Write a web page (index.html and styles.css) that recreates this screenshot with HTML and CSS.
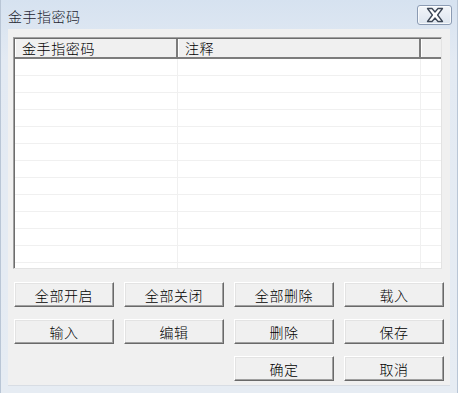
FILE: index.html
```html
<!DOCTYPE html>
<html lang="zh-CN">
<head>
    <meta charset="UTF-8">
    <title>金手指密码</title>
    <link rel="stylesheet" href="styles.css">
</head>
<body>
    <div class="window">
        <div class="titlebar">
            <span class="title">金手指密码</span>
            <button class="close-btn">
                <svg width="20" height="16" viewBox="0 0 20 16">
                    <path d="M2.5 1.5 L7 1.5 L10 5 L13 1.5 L17.5 1.5 L12.6 8 L17.5 14.5 L13 14.5 L10 11 L7 14.5 L2.5 14.5 L7.4 8 Z" fill="#fff" stroke="#3c4655" stroke-width="1.3" stroke-linejoin="round"/>
                </svg>
            </button>
        </div>

        <div class="client">
            <div class="listview">
                <div class="lv-header">
                    <div class="col col-code">金手指密码</div>
                    <div class="col col-note">注释</div>
                    <div class="col col-fill"></div>
                </div>
                <div class="lv-body">
                    <div class="row"><div class="cell c1"></div><div class="cell c2"></div><div class="cell c3"></div></div>
                    <div class="row"><div class="cell c1"></div><div class="cell c2"></div><div class="cell c3"></div></div>
                    <div class="row"><div class="cell c1"></div><div class="cell c2"></div><div class="cell c3"></div></div>
                    <div class="row"><div class="cell c1"></div><div class="cell c2"></div><div class="cell c3"></div></div>
                    <div class="row"><div class="cell c1"></div><div class="cell c2"></div><div class="cell c3"></div></div>
                    <div class="row"><div class="cell c1"></div><div class="cell c2"></div><div class="cell c3"></div></div>
                    <div class="row"><div class="cell c1"></div><div class="cell c2"></div><div class="cell c3"></div></div>
                    <div class="row"><div class="cell c1"></div><div class="cell c2"></div><div class="cell c3"></div></div>
                    <div class="row"><div class="cell c1"></div><div class="cell c2"></div><div class="cell c3"></div></div>
                    <div class="row"><div class="cell c1"></div><div class="cell c2"></div><div class="cell c3"></div></div>
                    <div class="row"><div class="cell c1"></div><div class="cell c2"></div><div class="cell c3"></div></div>
                    <div class="row"><div class="cell c1"></div><div class="cell c2"></div><div class="cell c3"></div></div>
                    <div class="row"><div class="cell c1"></div><div class="cell c2"></div><div class="cell c3"></div></div>
                </div>
            </div>

            <div class="buttons">
                <button class="btn">全部开启</button>
                <button class="btn">全部关闭</button>
                <button class="btn">全部删除</button>
                <button class="btn">载入</button>
                <button class="btn">输入</button>
                <button class="btn">编辑</button>
                <button class="btn">删除</button>
                <button class="btn">保存</button>
                <button class="btn btn-ok">确定</button>
                <button class="btn">取消</button>
            </div>
        </div>
    </div>
</body>
</html>
```

FILE: styles.css
```css
* {
    box-sizing: border-box;
    margin: 0;
    padding: 0;
}

body {
    background: #f0f0f0;
    font-family: "Noto Sans CJK SC", "Noto Sans", sans-serif;
    font-size: 14px;
    font-weight: 300;
    color: #000;
}

.window {
    width: 458px;
    height: 393px;
    background: linear-gradient(#d6e2f0, #e3eaf3 60px, #e6ecf3);
    padding: 0 7px 7px 7px;
    border-left: 1px solid #b9c6d6;
    border-right: 1px solid #b9c6d6;
}

.titlebar {
    height: 29px;
    display: flex;
    align-items: center;
    justify-content: space-between;
}

.title {
    font-size: 14px;
    letter-spacing: 0.5px;
    color: #1e2530;
    margin-top: 2px;
}

.close-btn {
    width: 35px;
    height: 20px;
    margin-right: -2px;
    margin-top: 1px;
    border: 1px solid #8b9bb3;
    border-radius: 3px;
    background: linear-gradient(#f2f5f9, #dde5ef);
    box-shadow: inset 0 0 0 1px rgba(255,255,255,0.7);
    display: flex;
    align-items: center;
    justify-content: center;
}

.client {
    height: 357px;
    background: #f0f0f0;
    padding: 8px 0 0 5px;
    border-bottom: 1px solid #d8dde4;
}

.listview {
    width: 429px;
    height: 232px;
    background: #fff;
    border-top: 1px solid #a0a0a0;
    border-left: 1px solid #a0a0a0;
    border-right: 1px solid #e3e3e3;
    border-bottom: 1px solid #e3e3e3;
    box-shadow: inset 1px 1px 0 #6d6d6d;
    overflow: hidden;
}

.lv-header {
    display: flex;
    height: 20px;
    background: #f0f0f0;
    border-bottom: 2px solid #7c7c7c;
    margin-left: 1px;
    margin-top: 1px;
}

.col {
    height: 18px;
    line-height: 18px;
    padding-left: 6px;
    letter-spacing: 0.6px;
    border-right: 2px solid #7c7c7c;
    border-left: 1px solid #fff;
}

.col-code {
    width: 163px;
}

.col-note {
    width: 243px;
}

.col-fill {
    flex: 1;
    border-right: none;
}

.lv-body {
    margin-left: 1px;
}

.row {
    display: flex;
    height: 17px;
    border-bottom: 1px solid #f0f0f0;
}

.cell {
    height: 16px;
    border-right: 1px solid #f0f0f0;
}

.c1 {
    width: 163px;
}

.c2 {
    width: 243px;
}

.c3 {
    flex: 1;
    border-right: none;
}

.buttons {
    display: grid;
    grid-template-columns: repeat(4, 100px);
    grid-auto-rows: 25px;
    column-gap: 10px;
    row-gap: 12px;
    margin-top: 13px;
    margin-left: 1px;
}

.btn {
    font-family: "Noto Sans CJK SC", "Noto Sans", sans-serif;
    font-size: 14px;
    font-weight: 300;
    letter-spacing: 0.6px;
    background: #f0f0f0;
    color: #000;
    border-top: 1px solid #fff;
    border-left: 1px solid #fff;
    border-right: 1px solid #696969;
    border-bottom: 1px solid #696969;
    box-shadow: inset -1px -1px 0 #a0a0a0, inset 1px 1px 0 #e3e3e3;
}

.btn-ok {
    grid-column: 3;
}
```
